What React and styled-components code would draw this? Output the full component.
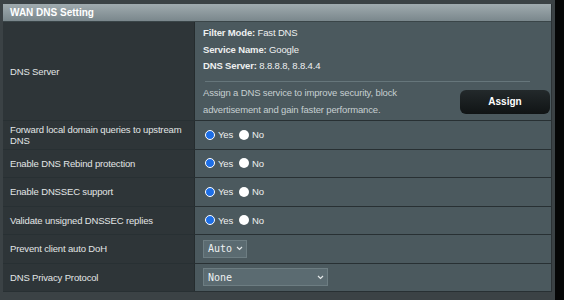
import React from "react";
import styled, { createGlobalStyle } from "styled-components";

const GlobalStyle = createGlobalStyle`
  html, body {
    margin: 0;
    padding: 0;
    background: #3b4245;
    font-family: "Liberation Sans", Arial, sans-serif;
  }
`

const Page = styled.div`
  display: flex;
  width: 564px;
  height: 300px;
  overflow: hidden;
  background: #3b4245;
`

const Main = styled.div`
  width: 549px;
  padding: 4px 0 0 3px;
`

const Edge = styled.div`
  margin-left: auto;
  width: 9px;
  background: #050606;
`

const Table = styled.div`
  width: 548px;
  border-right: 1px solid #2a3134;
`

const Header = styled.div`
  height: 17px;
  display: flex;
  align-items: center;
  padding-left: 7px;
  background: linear-gradient(#a0abaf, #7a878c);
  border-bottom: 1px solid #3a4548;
  color: #ffffff;
  font-size: 10px;
  font-weight: bold;
`

const Row = styled.div`
  display: flex;
  min-height: ${p => p.$height || 27.5}px;
  border-bottom: 1px solid #283033;
`

const Label = styled.div`
  flex-shrink: 0;
  width: 192px;
  box-sizing: border-box;
  padding: 0 10px 0 7px;
  display: flex;
  align-items: center;
  background: #2e3538;
  border-right: 1px solid #252c2e;
  color: #e2e5e6;
  font-size: 9.5px;
  letter-spacing: -0.15px;
  line-height: 11px;
`

const Cell = styled.div`
  flex: 1;
  display: flex;
  align-items: center;
  gap: 3px;
  padding-left: 8px;
  background: #4b595e;
  color: #eef0f0;
  font-size: 9.5px;
  letter-spacing: -0.15px;
`

const ServerCell = styled.div`
  flex: 1;
  padding: 3px 0 0 8px;
  background: #4b595e;
  color: #eef0f0;
  font-size: 9.5px;
  letter-spacing: -0.15px;
`

const Info = styled.div`
  line-height: 16.5px;
  b {
    font-weight: bold;
  }
`

const Divider = styled.div`
  width: 325px;
  height: 1px;
  margin: 6px 0 0 2px;
  background: #66767b;
`

const AssignBox = styled.div`
  display: flex;
  align-items: flex-start;
  padding-top: 2px;
`

const Desc = styled.div`
  width: 240px;
  line-height: 17px;
  color: #c6cfd1;
`

const Button = styled.div`
  margin: 6px 1px 0 auto;
  width: 90px;
  height: 24px;
  border-radius: 6px;
  background: linear-gradient(#23292b, #101415);
  color: #ffffff;
  font-size: 10px;
  font-weight: bold;
  letter-spacing: 0;
  display: flex;
  align-items: center;
  justify-content: center;
`

const Radio = styled.span`
  box-sizing: border-box;
  width: 10px;
  height: 10px;
  border-radius: 50%;
  margin-left: ${p => (p.$first ? 2 : 3)}px;
  background: ${p => (p.$checked ? "#1d6ee6" : "#ffffff")};
  border: ${p => (p.$checked ? "1.5px solid #ffffff" : "none")};
`

const Select = styled.div`
  box-sizing: border-box;
  width: ${p => p.$width}px;
  height: 18px;
  display: flex;
  align-items: center;
  justify-content: space-between;
  padding: 0 3px 0 4px;
  background: #5b6b71;
  border: 1px solid #6d7d82;
  color: #eef1f2;
  font-family: "DejaVu Sans Mono", "Liberation Mono", monospace;
  font-size: 10px;
  letter-spacing: 0;
`

const Chevron = () => (
  <svg width="7" height="5" viewBox="0 0 7 5">
    <path d="M1 1 L3.5 3.5 L6 1" stroke="#e5e9ea" strokeWidth="1.2" fill="none" />
  </svg>
)

const YesNo = () => (
  <>
    <Radio $checked $first />
    <span>Yes</span>
    <Radio />
    <span>No</span>
  </>
)

const radioRows = [
  "Forward local domain queries to upstream DNS",
  "Enable DNS Rebind protection",
  "Enable DNSSEC support",
  "Validate unsigned DNSSEC replies"
]

export default function App() {
  return (
    <Page>
      <GlobalStyle />
      <Main>
        <Table>
          <Header>WAN DNS Setting</Header>
          <Row $height={98}>
            <Label>DNS Server</Label>
            <ServerCell>
              <Info><b>Filter Mode:</b> Fast DNS</Info>
              <Info><b>Service Name:</b> Google</Info>
              <Info><b>DNS Server:</b> 8.8.8.8, 8.8.4.4</Info>
              <Divider />
              <AssignBox>
                <Desc>Assign a DNS service to improve security, block advertisement and gain faster performance.</Desc>
                <Button>Assign</Button>
              </AssignBox>
            </ServerCell>
          </Row>
          {radioRows.map(text => (
            <Row key={text}>
              <Label>{text}</Label>
              <Cell><YesNo /></Cell>
            </Row>
          ))}
          <Row>
            <Label>Prevent client auto DoH</Label>
            <Cell>
              <Select $width={44}>Auto <Chevron /></Select>
            </Cell>
          </Row>
          <Row>
            <Label>DNS Privacy Protocol</Label>
            <Cell>
              <Select $width={125}>None <Chevron /></Select>
            </Cell>
          </Row>
        </Table>
      </Main>
      <Edge />
    </Page>
  );
}
